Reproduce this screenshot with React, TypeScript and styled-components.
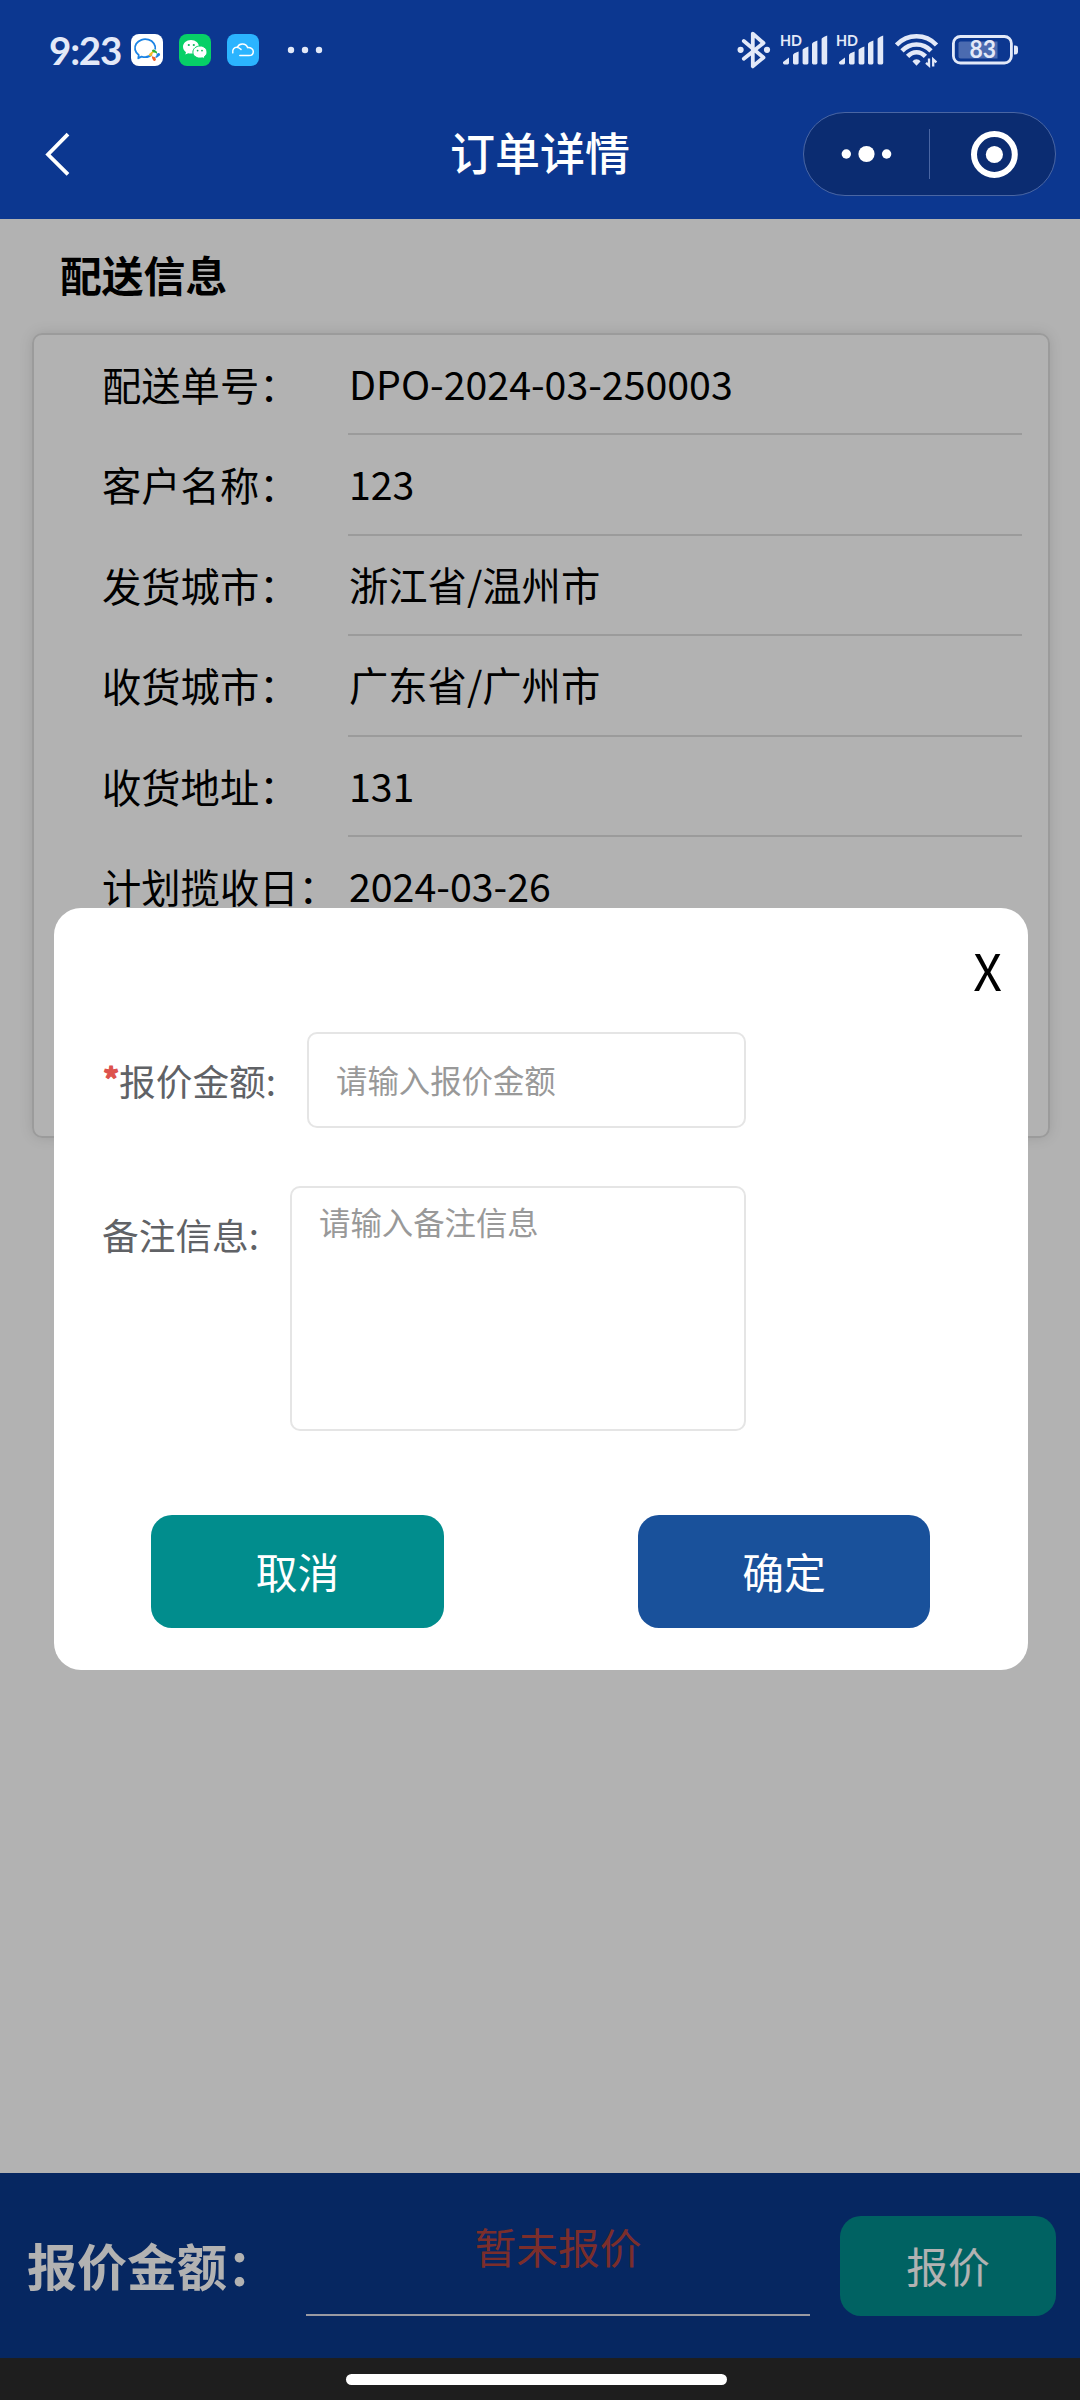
import React from "react";
import styled, { createGlobalStyle } from "styled-components";

const Global = createGlobalStyle`
  * { box-sizing: border-box; }
  body {
    margin: 0;
    background: #fff;
    font-family: "Noto Sans CJK SC", "Noto Sans", sans-serif;
    color: #000;
  }
`;

const Screen = styled.div`
  width: 1080px;
  height: 2400px;
  display: flex;
  flex-direction: column;
  overflow: hidden;
`;

const Header = styled.header`
  height: 219px;
  flex: none;
  background: #0c3790;
  color: #fff;
  display: flex;
  flex-direction: column;
`;

const StatusBar = styled.div`
  height: 100px;
  padding: 0 61px 0 49px;
  display: flex;
  align-items: center;
  justify-content: space-between;
  color: #e3e9f8;
`;

const StatusGroup = styled.div`
  display: flex;
  align-items: center;
`;

const Clock = styled.span`
  width: 82px;
  font-family: Lato, sans-serif;
  font-weight: 700;
  font-size: 38.5px;
  letter-spacing: -1.2px;
  line-height: 46px;
  white-space: nowrap;
`;

const AppIcon = styled.svg`
  width: 32px;
  height: 32px;
  margin-right: 16px;
`;

const Glyph = styled.svg<{ $w: number; $h: number; $ml?: number }>`
  display: block;
  flex: none;
  width: ${(p) => p.$w}px;
  height: ${(p) => p.$h}px;
  margin-left: ${(p) => p.$ml ?? 0}px;
`;

const NavBar = styled.div`
  height: 119px;
  padding: 0 24px 12px 44px;
  display: grid;
  grid-template-columns: 253px 1fr 253px;
  align-items: center;
`;

const Title = styled.h1`
  margin: 0;
  padding: 0 20px 3px 0;
  text-align: center;
  font-size: 45px;
  font-weight: 500;
  line-height: 64px;
`;

const Capsule = styled.div`
  width: 253px;
  height: 84px;
  border: 1px solid #4a66a3;
  border-radius: 42px;
  background: #0b2c71;
  display: flex;
  align-items: center;
`;

const Main = styled.main`
  position: relative;
  height: 2139px;
  flex: none;
  display: flex;
  flex-direction: column;
  background: #fff;
`;

const Content = styled.section`
  flex: 1;
  padding: 23px 30px 0 32px;
`;

const SectionTitle = styled.h2`
  margin: 0 0 27px 28px;
  font-size: 41.8px;
  font-weight: 700;
  line-height: 64px;
`;

const Card = styled.div`
  height: 805px;
  border: 2px solid #dfdfdf;
  border-radius: 10px;
  box-shadow: 0 0 14px rgba(0, 0, 0, 0.12);
  padding-right: 26px;
`;

const Row = styled.div`
  display: grid;
  grid-template-columns: 314px 1fr;
  height: 100.4px;
  font-size: 39.3px;
  line-height: 96px;
  white-space: nowrap;
`;

const RowLabel = styled.span`
  padding: 1px 0 0 68px;
`;

const RowValue = styled.span`
  padding-left: 1px;
  border-bottom: 2px solid #dfdfdf;
`;

const BottomBar = styled.footer`
  height: 185px;
  flex: none;
  background: #0a388b;
  padding: 0 24px 0 27px;
  display: grid;
  grid-template-columns: 279px 504px 1fr;
  align-items: center;
`;

const BottomLabel = styled.strong`
  padding-bottom: 3px;
  color: #fff;
  font-size: 50px;
  line-height: 72px;
  white-space: nowrap;
`;

const QuoteStatus = styled.div`
  height: 101px;
  border-bottom: 2px solid #dbdde8;
  text-align: center;
  color: #b1423e;
  font-size: 41.8px;
  line-height: 63px;
`;

const Button = styled.button<{ $w: number; $h: number; $bg: string; $lift?: number }>`
  width: ${(p) => p.$w}px;
  height: ${(p) => p.$h}px;
  background: ${(p) => p.$bg};
  border: 0;
  border-radius: 21px;
  justify-self: end;
  padding: 0 0 ${(p) => p.$lift ?? 0}px;
  color: #fff;
  font: 400 41.8px/64px "Noto Sans CJK SC", sans-serif;
`;

const Overlay = styled.div`
  position: absolute;
  inset: 0;
  background: rgba(0, 0, 0, 0.3);
  display: flex;
  align-items: center;
  justify-content: center;
`;

const Dialog = styled.div`
  width: 974px;
  height: 762px;
  margin-left: 2px;
  border-radius: 27px;
  background: #fff;
  display: flex;
  flex-direction: column;
`;

const Close = styled.div`
  height: 124px;
  padding: 25px 26px 0 0;
  text-align: right;
  font-size: 50px;
  line-height: 72px;
`;

const Field = styled.div<{ $mb: number }>`
  display: flex;
  align-items: flex-start;
  padding-left: 48px;
  width: 692px;
  margin-bottom: ${(p) => p.$mb}px;
`;

const FieldLabel = styled.label<{ $w: number }>`
  flex: none;
  width: ${(p) => p.$w}px;
  padding-top: 20px;
  color: #606266;
  font-size: 36.7px;
  line-height: 56px;
  white-space: nowrap;
`;

const Required = styled.span`
  display: inline-block;
  width: 17px;
  padding-left: 1px;
  color: #dd524d;
  font-size: 32px;
  font-weight: 700;
  line-height: 40px;
  vertical-align: 4px;
  -webkit-text-stroke: 1.2px #dd524d;
`;

const boxText = `
  flex: 1;
  min-width: 0;
  border: 2px solid #e5e5e5;
  border-radius: 10px;
  background: #fff;
  outline: none;
  resize: none;
  font: 400 31.4px/44px "Noto Sans CJK SC", sans-serif;
  &::placeholder { color: #999; opacity: 1; }
`;

const Input = styled.input`
  ${boxText}
  height: 96px;
  padding: 0 27px 1px;
`;

const TextArea = styled.textarea`
  ${boxText}
  height: 245px;
  padding: 12px 27px;
`;

const Actions = styled.div`
  display: flex;
  justify-content: space-between;
  padding: 0 98px 0 97px;
`;

const HomeArea = styled.div`
  height: 42px;
  flex: none;
  background: #1e1e1e;
  display: flex;
  justify-content: center;
  padding: 16px 7px 0 0;
`;

const HomePill = styled.div`
  width: 381px;
  height: 11px;
  border-radius: 6px;
  background: #fff;
`;

const SignalText = styled.text`
  font: 700 15px Lato, sans-serif;
`;

const BatteryText = styled.text`
  font: 700 24px Lato, sans-serif;
`;

const rows = [
  ["配送单号：", "DPO-2024-03-250003"],
  ["客户名称：", "123"],
  ["发货城市：", "浙江省/温州市"],
  ["收货城市：", "广东省/广州市"],
  ["收货地址：", "131"],
  ["计划揽收日：", "2024-03-26"],
];

const Signal = ({ ml }: { ml: number }) => (
  <Glyph $w={50} $h={44} $ml={ml} viewBox="-2 -4 50 44" fill="#e3e9f8">
    <SignalText x="0" y="14" textLength="22" lengthAdjust="spacingAndGlyphs">HD</SignalText>
    <path d="M3 30 L9 25.6 V31 Q9 32.4 7.6 32.4 H4.4 Q3 32.4 3 31Z" />
    <path d="M13 23 Q13 21.6 18.6 19.6 V31 Q18.6 32.4 17.2 32.4 H14.4 Q13 32.4 13 31Z" />
    <path d="M22.6 18 Q22.6 16.4 28.4 14.4 V31 Q28.4 32.4 27 32.4 H24 Q22.6 32.4 22.6 31Z" />
    <path d="M32 12 Q32 10.6 37.4 8.6 V31 Q37.4 32.4 36 32.4 H33.4 Q32 32.4 32 31Z" />
    <path d="M41.6 7 Q41.6 5.4 47.2 3.4 V31 Q47.2 32.4 45.8 32.4 H43 Q41.6 32.4 41.6 31Z" />
  </Glyph>
);

export default function App() {
  return (
    <Screen>
      <Global />
      <Header>
        <StatusBar>
          <StatusGroup>
            <Clock>9:23</Clock>
            <AppIcon viewBox="0 0 32 32">
              <rect width="32" height="32" rx="8" fill="#fff" />
              <path d="M21.5 20 A10.2 8.9 0 0 1 10.5 22.6 L7.3 24.3 L7.7 21 A10.2 8.9 0 1 1 24.2 15.5" fill="none" stroke="#1b83e4" strokeWidth="1.8" strokeLinejoin="round" />
              <path d="M22.5 17 l2 1.5" stroke="#2aae34" strokeWidth="3" strokeLinecap="round" />
              <path d="M27.6 20.6 l-2.4 1.6" stroke="#1b83e4" strokeWidth="3" strokeLinecap="round" />
              <path d="M23.4 25.4 l-1-2" stroke="#f0602a" strokeWidth="3" strokeLinecap="round" />
              <path d="M19.4 20.8 l2-1.8" stroke="#f5bd25" strokeWidth="3" strokeLinecap="round" />
              <circle cx="23.4" cy="20.8" r="2.2" fill="#fff" />
            </AppIcon>
            <AppIcon viewBox="0 0 32 32">
              <rect width="32" height="32" rx="8" fill="#07d067" />
              <path d="M12 6 C7.4 6 4 9 4 12.8 C4 15 5.1 16.9 7 18.2 L6.3 20.6 L9.2 19.2 A9 9 0 0 0 12 19.6 C16.6 19.6 20 16.6 20 12.8 C20 9 16.6 6 12 6Z" fill="#fff" />
              <path d="M21 12 C17 12 13.9 14.7 13.9 18.1 C13.9 21.5 17 24.1 21 24.1 A8 8 0 0 0 23.3 23.8 L25.6 25 L25.1 23 C26.9 21.8 28 20.1 28 18.1 C28 14.7 25 12 21 12Z" fill="#fff" stroke="#07d067" strokeWidth="1" />
              <circle cx="9.8" cy="11" r="1.1" fill="#07b85b" />
              <circle cx="14.8" cy="11" r="1.1" fill="#07b85b" />
              <circle cx="18.6" cy="16.6" r="0.9" fill="#07b85b" />
              <circle cx="23" cy="16.6" r="0.9" fill="#07b85b" />
            </AppIcon>
            <AppIcon viewBox="0 0 32 32">
              <rect width="32" height="32" rx="8" fill="#2bb4ff" />
              <path d="M5.8 18.8 C5 15.4 7.4 13.1 9.8 13.2 C12 13.3 13 14.4 14 15.4 M10.6 13 C12.2 9 18.8 8.8 20.6 13.6 C24 13.4 26.4 15.2 26.3 17.8 C26.2 20.3 24.4 21.6 22 21.6 H12.8" fill="none" stroke="#fff" strokeWidth="1.5" strokeLinecap="round" />
            </AppIcon>
            <Glyph $w={36} $h={8} $ml={12} viewBox="0 0 36 8" fill="#e3e9f8">
              <circle cx="4" cy="4" r="3.2" />
              <circle cx="18" cy="4" r="3.2" />
              <circle cx="32" cy="4" r="3.2" />
            </Glyph>
          </StatusGroup>
          <StatusGroup>
            <Glyph $w={34} $h={38} viewBox="0 0 34 38">
              <path d="M6.8 10 L26.5 26.5 L15.8 35.4 V2.6 L26.5 12 L6.8 27.8" fill="none" stroke="#e3e9f8" strokeWidth="3.8" strokeLinejoin="round" strokeLinecap="round" />
              <circle cx="3.6" cy="18.8" r="3.1" fill="#e3e9f8" />
              <circle cx="30" cy="18.8" r="3.1" fill="#e3e9f8" />
            </Glyph>
            <Signal ml={7} />
            <Signal ml={6} />
            <Glyph $w={44} $h={36} $ml={11} viewBox="0 0 44 36">
              <g fill="none" stroke="#e3e9f8" strokeWidth="4.6">
                <path d="M1.5 13 C12.5 1.4 30.5 1.4 41.5 13" />
                <path d="M7 18.8 C15 10.4 28 10.4 36 18.8" />
                <path d="M12.6 24.4 C18 18.8 25 18.8 30.4 24.4" />
              </g>
              <path d="M17.5 29.6 C19.4 26.4 23.6 26.4 25.5 29.6 L21.5 33.8Z" fill="#e3e9f8" />
              <path d="M34 26.6 V33.4 L31 30.8 M38.2 34.4 V27.4 L41.4 30.4" fill="none" stroke="#e3e9f8" strokeWidth="2.3" />
            </Glyph>
            <Glyph $w={68} $h={32} $ml={12} viewBox="0 0 68 32">
              <rect x="2.4" y="2.5" width="58" height="26.5" rx="7" fill="none" stroke="#e3e9f8" strokeWidth="2.8" />
              <path d="M9.5 7.4 H46.5 V24.4 H9.5 Q7.5 24.4 7.5 22.4 V9.4 Q7.5 7.4 9.5 7.4Z" fill="#4b6bb0" />
              <path d="M63 11.5 H64 Q67 11.5 67 14 V18 Q67 20.5 64 20.5 H63Z" fill="#e3e9f8" />
              <BatteryText x="18.6" y="24.4" textLength="26.5" lengthAdjust="spacingAndGlyphs" fill="#e3e9f8">83</BatteryText>
            </Glyph>
          </StatusGroup>
        </StatusBar>
        <NavBar>
          <Glyph $w={28} $h={46} viewBox="0 0 28 46">
            <path d="M24 3.2 L4 23.5 L24 43.4" fill="none" stroke="#fff" strokeWidth="3.8" />
          </Glyph>
          <Title>订单详情</Title>
          <Capsule>
            <Glyph $w={251} $h={82} viewBox="0 0 251 82">
              <g fill="#fff">
                <circle cx="42.3" cy="41" r="4.7" />
                <circle cx="62.5" cy="41" r="8.1" />
                <circle cx="82.6" cy="41" r="4.7" />
                <circle cx="190.4" cy="41.5" r="8.6" />
              </g>
              <path d="M125.5 16 V66" stroke="#4a66a3" strokeWidth="1" />
              <circle cx="190.4" cy="41.5" r="20.4" fill="none" stroke="#fff" strokeWidth="6" />
            </Glyph>
          </Capsule>
        </NavBar>
      </Header>
      <Main>
        <Content>
          <SectionTitle>配送信息</SectionTitle>
          <Card>
            {rows.map(([label, value]) => (
              <Row key={label}>
                <RowLabel>{label}</RowLabel>
                <RowValue>{value}</RowValue>
              </Row>
            ))}
          </Card>
        </Content>
        <BottomBar>
          <BottomLabel>报价金额：</BottomLabel>
          <QuoteStatus>暂未报价</QuoteStatus>
          <Button $w={216} $h={100} $bg="#018d8d" $lift={2}>报价</Button>
        </BottomBar>
        <Overlay>
          <Dialog>
            <Close>X</Close>
            <Field $mb={58}>
              <FieldLabel $w={205}><Required>*</Required>报价金额:</FieldLabel>
              <Input placeholder="请输入报价金额" />
            </Field>
            <Field $mb={84}>
              <FieldLabel $w={188}>备注信息:</FieldLabel>
              <TextArea placeholder="请输入备注信息" />
            </Field>
            <Actions>
              <Button $w={293} $h={113} $bg="#018d8d">取消</Button>
              <Button $w={292} $h={113} $bg="#19519b">确定</Button>
            </Actions>
          </Dialog>
        </Overlay>
      </Main>
      <HomeArea>
        <HomePill />
      </HomeArea>
    </Screen>
  );
}
